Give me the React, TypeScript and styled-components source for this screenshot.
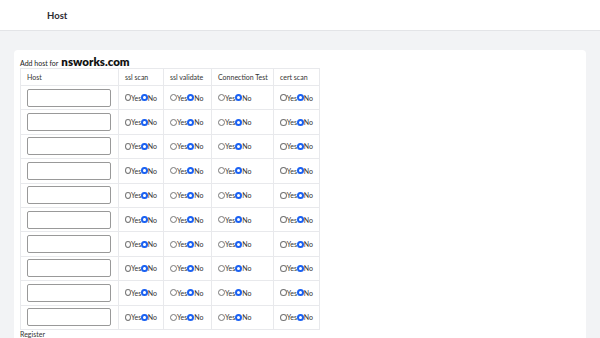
import React from "react";
import styled, { createGlobalStyle } from "styled-components";

const GlobalStyle = createGlobalStyle`
  html, body {
    margin: 0;
    padding: 0;
    background: #f2f3f5;
    font-family: Lato, "Noto Sans", sans-serif;
    color: #222;
  }
`;

const columns: string[] = ["ssl scan", "ssl validate", "Connection Test", "cert scan"];
const colWidths: number[] = [45, 48, 62, 46];

const rows: number[] = Array.from({ length: 10 }, (_, i) => i);

const Page = styled.div`
  width: 600px;
  height: 338px;
  overflow: hidden;
`;

const Header = styled.div`
  height: 30px;
  background: #fff;
  border-bottom: 1px solid #e3e4e7;
  display: flex;
  align-items: center;
  padding-left: 47px;
  font-size: 9.5px;
  font-weight: 700;
  color: #2b2b33;
`;

const Main = styled.div`
  padding: 19px 14px 0 14px;
`;

const Card = styled.div`
  background: #fff;
  border-radius: 4px;
  padding: 5px 6px 0 6px;
  min-height: 300px;
`;

const Title = styled.div`
  display: flex;
  align-items: baseline;
  gap: 3px;
  font-size: 7px;
  color: #222;
  height: 13px;
`;

const Domain = styled.span`
  font-size: 11.5px;
  font-weight: 800;
  color: #111;
`;

const Table = styled.table`
  border-collapse: collapse;
  table-layout: fixed;
  width: 299px;
  font-size: 7px;
  color: #333;
`;

const Th = styled.th<{ $w: number }>`
  width: ${(p) => p.$w}px;
  height: 17px;
  border: 1px solid #e8e9ec;
  font-weight: 400;
  text-align: left;
  padding: 0 6px;
  white-space: nowrap;
  box-sizing: border-box;
`;

const Td = styled.td`
  height: 24.4px;
  border: 1px solid #e8e9ec;
  padding: 0 6px;
  box-sizing: border-box;
  white-space: nowrap;
`;

const HostInput = styled.input`
  display: block;
  width: 84px;
  height: 18px;
  box-sizing: border-box;
  border: 1px solid #999;
  border-radius: 2px;
  margin: 0;
`;

const RadioGroup = styled.div`
  display: flex;
  align-items: center;
  font-size: 7px;
  color: #333;
`;

const Radio = styled.input.attrs({ type: "radio" })`
  appearance: none;
  margin: 0;
  width: 7px;
  height: 7px;
  border-radius: 50%;
  box-sizing: border-box;
  border: 1px solid #777;
  background: #fff;

  &:checked {
    border: 2px solid #1c62f2;
  }
`;

const Register = styled.div`
  font-size: 7px;
  line-height: 8px;
  color: #333;
`;

const YesNo = ({ name }: { name: string }) => (
  <RadioGroup>
    <Radio name={name} />
    Yes
    <Radio name={name} defaultChecked />
    No
  </RadioGroup>
);

const App = () => {
  return (
    <Page>
      <GlobalStyle />
      <Header>Host</Header>
      <Main>
        <Card>
          <Title>
            Add host for <Domain>nsworks.com</Domain>
          </Title>
          <Table>
            <thead>
              <tr>
                <Th $w={98}>Host</Th>
                {columns.map((c, i) => (
                  <Th key={c} $w={colWidths[i]}>
                    {c}
                  </Th>
                ))}
              </tr>
            </thead>
            <tbody>
              {rows.map((r) => (
                <tr key={r}>
                  <Td>
                    <HostInput />
                  </Td>
                  {columns.map((c) => (
                    <Td key={c}>
                      <YesNo name={`${c}-${r}`} />
                    </Td>
                  ))}
                </tr>
              ))}
            </tbody>
          </Table>
          <Register>Register</Register>
        </Card>
      </Main>
    </Page>
  );
};

export default App;
